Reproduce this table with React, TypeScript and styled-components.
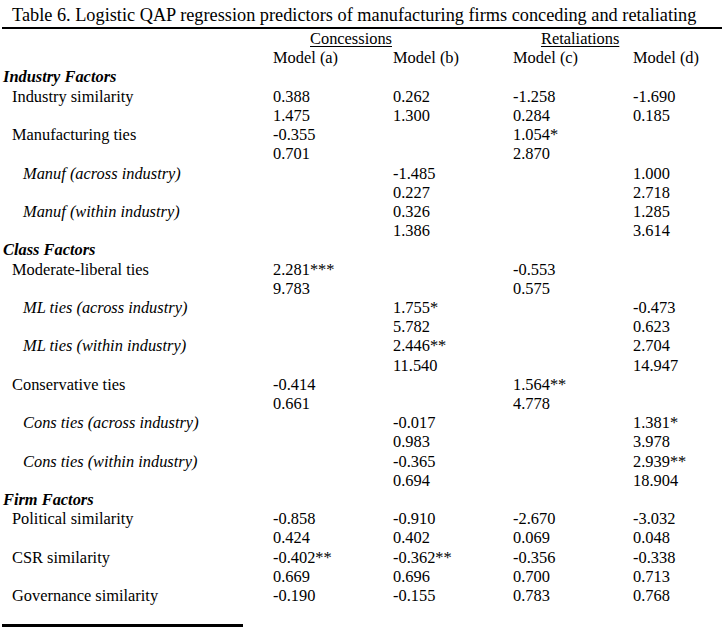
import React from 'react';
import styled, { createGlobalStyle } from 'styled-components';

type Kind = 'group' | 'item' | 'sub' | 'cont';

interface Row {
  kind: Kind;
  label?: string;
  v?: string[];
}

const rows: Row[] = [
  { kind: 'group', label: 'Industry Factors' },
  { kind: 'item', label: 'Industry similarity', v: ['0.388', '0.262', '-1.258', '-1.690'] },
  { kind: 'cont', v: ['1.475', '1.300', '0.284', '0.185'] },
  { kind: 'item', label: 'Manufacturing ties', v: ['-0.355', '', '1.054*', ''] },
  { kind: 'cont', v: ['0.701', '', '2.870', ''] },
  { kind: 'sub', label: 'Manuf (across industry)', v: ['', '-1.485', '', '1.000'] },
  { kind: 'cont', v: ['', '0.227', '', '2.718'] },
  { kind: 'sub', label: 'Manuf (within industry)', v: ['', '0.326', '', '1.285'] },
  { kind: 'cont', v: ['', '1.386', '', '3.614'] },
  { kind: 'group', label: 'Class Factors' },
  { kind: 'item', label: 'Moderate-liberal ties', v: ['2.281***', '', '-0.553', ''] },
  { kind: 'cont', v: ['9.783', '', '0.575', ''] },
  { kind: 'sub', label: 'ML ties (across industry)', v: ['', '1.755*', '', '-0.473'] },
  { kind: 'cont', v: ['', '5.782', '', '0.623'] },
  { kind: 'sub', label: 'ML ties (within industry)', v: ['', '2.446**', '', '2.704'] },
  { kind: 'cont', v: ['', '11.540', '', '14.947'] },
  { kind: 'item', label: 'Conservative ties', v: ['-0.414', '', '1.564**', ''] },
  { kind: 'cont', v: ['0.661', '', '4.778', ''] },
  { kind: 'sub', label: 'Cons ties (across industry)', v: ['', '-0.017', '', '1.381*'] },
  { kind: 'cont', v: ['', '0.983', '', '3.978'] },
  { kind: 'sub', label: 'Cons ties (within industry)', v: ['', '-0.365', '', '2.939**'] },
  { kind: 'cont', v: ['', '0.694', '', '18.904'] },
  { kind: 'group', label: 'Firm Factors' },
  { kind: 'item', label: 'Political similarity', v: ['-0.858', '-0.910', '-2.670', '-3.032'] },
  { kind: 'cont', v: ['0.424', '0.402', '0.069', '0.048'] },
  { kind: 'item', label: 'CSR similarity', v: ['-0.402**', '-0.362**', '-0.356', '-0.338'] },
  { kind: 'cont', v: ['0.669', '0.696', '0.700', '0.713'] },
  { kind: 'item', label: 'Governance similarity', v: ['-0.190', '-0.155', '0.783', '0.768'] },
];

const models = ['Model (a)', 'Model (b)', 'Model (c)', 'Model (d)'];

export default function App() {
  return (
    <>
      <GlobalStyle />
      <Page>
        <Title>
          Table 6. Logistic QAP regression predictors of manufacturing firms conceding and retaliating
        </Title>

        <GroupHead>
          <span />
          <Spanner $offset={37}>Concessions</Spanner>
          <Spanner $offset={28}>Retaliations</Spanner>
        </GroupHead>

        <ModelRow>
          <span />
          {models.map(m => (
            <Cell key={m}>{m}</Cell>
          ))}
        </ModelRow>

        {rows.map((row, i) => (
          <TableRow key={i}>
            <Label $kind={row.kind}>{row.label}</Label>
            {row.v &&
              row.v.map((val, j) => <Cell key={j}>{val}</Cell>)}
          </TableRow>
        ))}

        <FootRule />
      </Page>
    </>
  );
}

const GlobalStyle = createGlobalStyle`
  html, body {
    margin: 0;
    padding: 0;
    background: #ffffff;
  }

  body {
    font-family: "Liberation Serif", "Times New Roman", serif;
    font-size: 16.4px;
    color: #000000;
  }
`;

const Page = styled.div`
  width: 726px;
  height: 632px;
  overflow: hidden;
`;

const Title = styled.div`
  margin: 0 4px 0 2px;
  padding: 5.9px 0 1.9px 10px;
  font-size: 18.3px;
  line-height: 19.2px;
  white-space: nowrap;
  border-bottom: 2px solid #000;
`;

const Grid = styled.div`
  display: grid;
  grid-template-columns: 273px 120px 120px 120px 1fr;
  line-height: 19.2px;
  white-space: nowrap;
`;

const GroupHead = styled(Grid)`
  grid-template-columns: 273px 240px 1fr;
  line-height: 18.3px;
  padding-top: 1px;
`;

const Spanner = styled.span<{ $offset: number }>`
  padding-left: ${p => p.$offset}px;
  text-decoration: underline;
  text-underline-offset: 2px;
  text-decoration-thickness: 1px;
`;

const ModelRow = styled(Grid)``;

const TableRow = styled(Grid)``;

const Cell = styled.span``;

const Label = styled.span<{ $kind: Kind }>`
  padding-left: ${p =>
    p.$kind === 'group' ? 3 : p.$kind === 'sub' ? 23 : 12}px;
  font-weight: ${p => (p.$kind === 'group' ? 700 : 400)};
  font-style: ${p =>
    p.$kind === 'group' || p.$kind === 'sub' ? 'italic' : 'normal'};
  grid-column: ${p => (p.$kind === 'group' ? '1 / -1' : 'auto')};
`;

const FootRule = styled.div`
  width: 241px;
  height: 2.5px;
  margin: 19px 0 0 2px;
  background: #000;
`;
